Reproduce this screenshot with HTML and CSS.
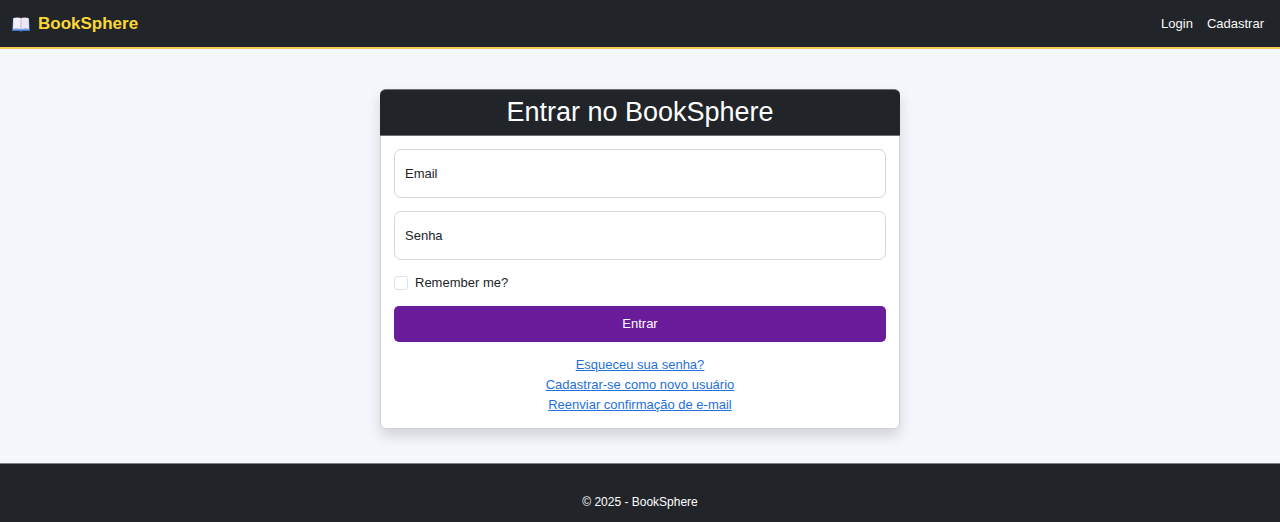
FILE: index.html
```html
<!DOCTYPE html>
<html lang="pt-BR">
<head>
<meta charset="utf-8">
<meta name="viewport" content="width=device-width, initial-scale=1">
<title>Entrar - BookSphere</title>
<link rel="stylesheet" href="styles.css">
</head>
<body>
<header class="navbar">
  <a class="brand" href="#">
    <svg class="brand-icon" viewBox="0 0 18 18" aria-hidden="true">
      <path d="M1 4h16l1 12H10.500L9 16.800 7.500 16H0z" fill="#3f78c4"/>
      <path d="M1 13.500h16v1.200H1z" fill="#8fb5e6"/>
      <path d="M1.300 3Q5.500 1.800 9 3v11Q5.500 13 1 13.700z" fill="#f3effa"/>
      <path d="M16.700 3Q12.500 1.800 9 3v11Q12.500 13 17 13.700z" fill="#ece6f6"/>
      <path d="M9 3v11" stroke="#b6b2cc" stroke-width="1"/>
    </svg>
    <span>BookSphere</span>
  </a>
  <nav class="nav-links">
    <a href="#">Login</a>
    <a href="#">Cadastrar</a>
  </nav>
</header>
<main class="content">
  <section class="card">
    <h1 class="card-header">Entrar no BookSphere</h1>
    <form class="card-body">
      <div class="field">
        <input class="field-input" id="email" type="email" autocomplete="username">
        <label class="field-label" for="email">Email</label>
      </div>
      <div class="field">
        <input class="field-input" id="senha" type="password" autocomplete="current-password">
        <label class="field-label" for="senha">Senha</label>
      </div>
      <div class="check">
        <input class="check-input" id="remember" type="checkbox">
        <label for="remember">Remember me?</label>
      </div>
      <button class="submit" type="submit">Entrar</button>
      <div class="links">
        <a href="#">Esqueceu sua senha?</a>
        <a href="#">Cadastrar-se como novo usuário</a>
        <a href="#">Reenviar confirmação de e-mail</a>
      </div>
    </form>
  </section>
</main>
<footer class="footer">© 2025 - BookSphere</footer>
</body>
</html>
```
FILE: styles.css
```css
* { box-sizing: border-box; }

body {
  display: flex;
  flex-direction: column;
  min-height: 100vh;
  margin: 0;
  background: #f4f7fc;
  color: #212529;
  font: 13px/20px "Liberation Sans", Arial, sans-serif;
}

.navbar {
  display: flex;
  align-items: center;
  justify-content: space-between;
  padding: 14px 16px 13px 12px;
  background: #212529;
  border-bottom: 2px solid #f2cd4e;
}

.brand {
  display: flex;
  align-items: center;
  gap: 8px;
  color: #fdd835;
  font-size: 17px;
  font-weight: bold;
  text-decoration: none;
}

.brand-icon { width: 18px; height: 18px; }

.nav-links { display: flex; gap: 14px; }
.nav-links a { color: #f8f9fa; text-decoration: none; }

.content {
  flex: 1;
  padding: 40px 12px 32px;
}

.card {
  max-width: 520px;
  margin: 0 auto;
  background: #fff;
  border: 1px solid #cfd1d5;
  border-radius: 6px;
  box-shadow: 0 7px 14px rgba(0, 0, 0, 0.15);
}

.card-header {
  margin: -1px -1px 0;
  padding: 7px 14px;
  background: #212529;
  border: 1px solid #6c7074;
  border-width: 1px 0;
  border-radius: 6px 6px 0 0;
  color: #fff;
  font-size: 27px;
  font-weight: normal;
  line-height: 31px;
  text-align: center;
}

.card-body {
  display: flex;
  flex-direction: column;
  gap: 13px;
  padding: 13px;
}

.field { display: grid; align-items: center; }

.field-input,
.field-label { grid-area: 1 / 1; }

.field-input {
  width: 100%;
  height: 49px;
  padding: 16px 10px 4px;
  background: #fff;
  border: 1px solid #d4d6d9;
  border-radius: 7px;
  color: inherit;
  font: inherit;
}

.field-label { padding: 0 11px; pointer-events: none; }

.field-input:focus + .field-label { align-self: start; font-size: 11px; }

.check { display: flex; align-items: center; gap: 7px; }

.check-input {
  width: 14px;
  height: 14px;
  margin: 0;
  appearance: none;
  background: #fff;
  border: 1px solid #dee2e6;
  border-radius: 3px;
}

.check-input:checked { background: #6a1b9a; }

.submit {
  padding: 8px;
  background: #6a1b9a;
  border: 0;
  border-radius: 5px;
  color: #fff;
  font: inherit;
}

.links {
  display: flex;
  flex-direction: column;
  align-items: center;
}

.links a { color: #1f70d8; }

.footer {
  padding: 28px 12px 10px;
  background: #212529;
  border-top: 1px solid #7c8084;
  color: #fff;
  font-size: 12px;
  text-align: center;
}
```
